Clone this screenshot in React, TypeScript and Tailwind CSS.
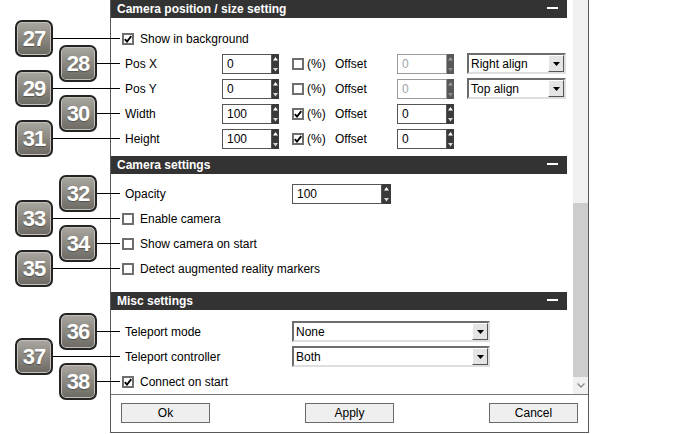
import React from "react";

type BadgeItem = { n: number; box: string; line: string };

const badges: BadgeItem[] = [
  { n: 27, box: "left-[15px] top-[20px]", line: "left-[52px] w-[68px] top-[38px]" },
  { n: 28, box: "left-[59px] top-[45px]", line: "left-[96px] w-[24px] top-[63px]" },
  { n: 29, box: "left-[15px] top-[70px]", line: "left-[52px] w-[68px] top-[88px]" },
  { n: 30, box: "left-[59px] top-[95px]", line: "left-[96px] w-[24px] top-[113px]" },
  { n: 31, box: "left-[15px] top-[120px]", line: "left-[52px] w-[68px] top-[138px]" },
  { n: 32, box: "left-[59px] top-[175px]", line: "left-[96px] w-[24px] top-[193px]" },
  { n: 33, box: "left-[15px] top-[200px]", line: "left-[52px] w-[68px] top-[218px]" },
  { n: 34, box: "left-[59px] top-[225px]", line: "left-[96px] w-[24px] top-[243px]" },
  { n: 35, box: "left-[15px] top-[250px]", line: "left-[52px] w-[68px] top-[268px]" },
  { n: 36, box: "left-[59px] top-[313px]", line: "left-[96px] w-[24px] top-[331px]" },
  { n: 37, box: "left-[15px] top-[338px]", line: "left-[52px] w-[68px] top-[356px]" },
  { n: 38, box: "left-[59px] top-[363px]", line: "left-[96px] w-[24px] top-[381px]" },
];

function Header({ title }: { title: string }) {
  return (
    <div className="h-[18px] bg-[#333333] flex items-center justify-between pl-[6px] pr-[9px]">
      <span className="text-white font-bold text-[12px] leading-none">{title}</span>
      <span className="w-[11px] h-[2px] bg-white mb-[3px]" />
    </div>
  );
}

function Check({ checked }: { checked?: boolean }) {
  return (
    <span className="w-[12px] h-[12px] border-2 border-[#6e6e6e] bg-white flex items-center justify-center shrink-0">
      {checked && (
        <svg width="8" height="8" viewBox="0 0 8 8">
          <path d="M0.8 4.2 L3 6.6 L7.3 1.2" stroke="#000" strokeWidth="1.9" fill="none" />
        </svg>
      )}
    </span>
  );
}

function Spin({ disabled, w = 7 }: { disabled?: boolean; w?: number }) {
  const c = w / 2;
  const fill = disabled ? "#9c9c9c" : "#ffffff";
  return (
    <svg width={w} height={20} viewBox={`0 0 ${w} 20`} className="block shrink-0">
      <rect width={w} height={20} fill={disabled ? "#585858" : "#3a3a3a"} />
      <path d={`M${c - 2.5} 6.5 L${c} 3 L${c + 2.5} 6.5 Z`} fill={fill} />
      <path d={`M${c - 2.5} 14 L${c + 2.5} 14 L${c} 17.5 Z`} fill={disabled ? "#8a8a8a" : "#d8d8d8"} />
    </svg>
  );
}

function Num({ value, w, disabled, spinW }: { value: string; w: string; disabled?: boolean; spinW?: number }) {
  return (
    <div className="flex h-[20px]">
      <div
        className={`${w} h-full border bg-white pl-[4px] flex items-center text-[12px] ${
          disabled ? "border-[#9a9a9a] text-[#a3a3a3]" : "border-[#555555] text-black"
        }`}
      >
        {value}
      </div>
      <Spin disabled={disabled} w={spinW} />
    </div>
  );
}

function Select({ value, w }: { value: string; w: string }) {
  return (
    <div
      className={`${w} h-[21px] flex border-2 border-t-[#6c6c6c] border-l-[#6c6c6c] border-r-[#dedede] border-b-[#dedede] bg-white`}
    >
      <div className="flex-1 pl-[2px] flex items-center text-[12px]">{value}</div>
      <div className="w-[16px] h-full bg-[#e4e4e4] border border-t-white border-l-white border-r-[#555555] border-b-[#555555] flex items-center justify-center">
        <svg width="7" height="4" viewBox="0 0 7 4">
          <path d="M0 0 L7 0 L3.5 4 Z" fill="#000" />
        </svg>
      </div>
    </div>
  );
}

function CheckRow({ label, checked }: { label: string; checked?: boolean }) {
  return (
    <div className="h-[25px] flex items-center pl-[11px]">
      <Check checked={checked} />
      <span className="ml-[6px]">{label}</span>
    </div>
  );
}

function PosRow({
  label,
  value,
  pct,
  offset,
  offDisabled,
  select,
}: {
  label: string;
  value: string;
  pct?: boolean;
  offset: string;
  offDisabled?: boolean;
  select?: string;
}) {
  return (
    <div className="h-[25px] flex items-center">
      <span className="w-[111px] pl-[14px]">{label}</span>
      <Num value={value} w="w-[50px]" />
      <span className="ml-[13px]">
        <Check checked={pct} />
      </span>
      <span className="ml-[3px] w-[28px]">(%)</span>
      <span className="w-[62px]">Offset</span>
      <Num value={offset} w="w-[50px]" disabled={offDisabled} />
      {select && (
        <span className="ml-[13px]">
          <Select value={select} w="w-[99px]" />
        </span>
      )}
    </div>
  );
}

function FieldRow({ label, children }: { label: string; children: React.ReactNode }) {
  return (
    <div className="h-[25px] flex items-center">
      <span className="w-[181px] pl-[14px]">{label}</span>
      {children}
    </div>
  );
}

function Btn({ label }: { label: string }) {
  return (
    <button className="w-[89px] h-[20px] bg-[#efefef] border border-[#6a6a6a] text-[12px] leading-none text-black">
      {label}
    </button>
  );
}

export default function App() {
  return (
    <div className="relative w-[700px] h-[434px] bg-white overflow-hidden font-['Liberation_Sans',Arial,sans-serif] text-[12px] text-black">
      <div className="ml-[110px] w-[479px] h-[433px] border-x border-b border-[#5a5a5a] flex flex-col">
        <div className="h-[394px] flex overflow-hidden">
          <div className="w-[456px] flex flex-col">
            {/* Camera position / size */}
            <Header title="Camera position / size setting" />
            <div className="pt-[8px] pb-[5px]">
              <CheckRow label="Show in background" checked />
              <PosRow label="Pos X" value="0" offset="0" offDisabled select="Right align" />
              <PosRow label="Pos Y" value="0" offset="0" offDisabled select="Top align" />
              <PosRow label="Width" value="100" pct offset="0" />
              <PosRow label="Height" value="100" pct offset="0" />
            </div>

            {/* Camera settings */}
            <Header title="Camera settings" />
            <div className="pt-[7px] pb-[11px]">
              <FieldRow label="Opacity">
                <Num value="100" w="w-[90px]" spinW={9} />
              </FieldRow>
              <CheckRow label="Enable camera" />
              <CheckRow label="Show camera on start" />
              <CheckRow label="Detect augmented reality markers" />
            </div>

            {/* Misc */}
            <Header title="Misc settings" />
            <div className="pt-[9px]">
              <FieldRow label="Teleport mode">
                <Select value="None" w="w-[198px]" />
              </FieldRow>
              <FieldRow label="Teleport controller">
                <Select value="Both" w="w-[198px]" />
              </FieldRow>
              <CheckRow label="Connect on start" checked />
            </div>
          </div>
          <div className="w-[6px]" />
          <div className="w-[15px] flex flex-col">
            <div className="h-[203px] bg-[#f0f0f0]" />
            <div className="h-[174px] bg-[#cdcdcd]" />
            <div className="flex-1 bg-[#f0f0f0] flex items-center justify-center">
              <svg width="8" height="5" viewBox="0 0 8 5">
                <path d="M0.5 0.5 L4 4 L7.5 0.5" stroke="#8a8a8a" strokeWidth="1.3" fill="none" />
              </svg>
            </div>
          </div>
        </div>
        <div className="h-px bg-[#767676]" />
        <div className="flex-1 flex justify-between items-start pt-[8px] px-[10px]">
          <Btn label="Ok" />
          <Btn label="Apply" />
          <Btn label="Cancel" />
        </div>
      </div>

      {/* numbered callouts */}
      {badges.map((b) => (
        <React.Fragment key={b.n}>
          <div className={`absolute h-px bg-black ${b.line}`} />
          <div
            className={`absolute w-[38px] h-[37px] rounded-[7px] border-2 border-[#242424] bg-linear-to-b from-[#aaa7a0] to-[#6d6a63] shadow-[inset_0_0_0_1px_#c2c0b9] flex items-center justify-center ${b.box}`}
          >
            <span className="text-white font-bold text-[22px] leading-none tracking-[-1px] [text-shadow:0_1px_1px_rgba(0,0,0,0.35)]">
              {b.n}
            </span>
          </div>
        </React.Fragment>
      ))}
    </div>
  );
}
